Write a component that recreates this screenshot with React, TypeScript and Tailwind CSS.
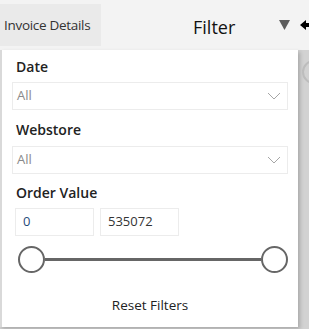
import React from "react";

function Chevron() {
  return (
    <svg width="14" height="8" viewBox="0 0 14 8" className="shrink-0">
      <path d="M1 1 L7 7 L13 1" fill="none" stroke="#a6a6a6" strokeWidth="1" />
    </svg>
  );
}

function SelectBox() {
  return (
    <div className="ml-[10px] mr-[10px] h-[28px] border border-[#ececec] flex items-center justify-between pl-[4px] pr-[6px]">
      <span className="text-[13px] text-[#8a8a8a]">All</span>
      <Chevron />
    </div>
  );
}

export default function App() {
  return (
    <div
      className="w-[309px] h-[329px] overflow-hidden bg-[#f3f3f3] flex flex-col"
      style={{ fontFamily: "'Open Sans', 'Noto Sans', sans-serif" }}
    >
      {/* top bar */}
      <div className="h-[50px] flex items-start shrink-0">
        <div className="mt-[4px] h-[42px] w-[101px] shrink-0 bg-[#eaeaea] flex items-center pl-[4px]">
          <span className="text-[13.5px] text-[#333] tracking-[-0.3px]">Invoice Details</span>
        </div>
        <div className="flex-1 flex items-center h-[50px] pt-[4px]">
          <span className="ml-[92px] text-[18px] text-[#111]">Filter</span>
          <svg width="11" height="10" viewBox="0 0 11 10" className="ml-[44px] shrink-0 -mt-[5px]">
            <path d="M0 0 H11 L5.5 10 Z" fill="#5c5c5c" />
          </svg>
          <svg width="12" height="12" viewBox="0 0 12 12" className="ml-[10px] shrink-0 -mt-[5px]">
            <path d="M0 6 L6 1 V4 H12 V8 H6 V11 Z" fill="#000" />
          </svg>
        </div>
      </div>

      {/* body */}
      <div className="flex flex-1 bg-[#d2d2d2]">
        <div className="w-[298px] h-[277px] shrink-0 bg-white border-l-2 border-[#d9d9d9] shadow-[2px_2px_4px_rgba(0,0,0,0.2)] flex flex-col">
          <div className="pl-[14px] pt-[6px] h-[32px] text-[14px] font-semibold text-[#222]">Date</div>
          <SelectBox />
          <div className="pl-[14px] pt-[9px] h-[36px] text-[14px] font-semibold text-[#222]">Webstore</div>
          <SelectBox />
          <div className="pl-[14px] pt-[8px] h-[34px] text-[14px] font-semibold text-[#222]">Order Value</div>
          <div className="flex gap-[6px] pl-[13px]">
            <div className="w-[79px] h-[28px] border border-[#ececec] flex items-center pl-[7px] text-[13px] text-[#1f4a7a]">0</div>
            <div className="w-[79px] h-[28px] border border-[#ececec] flex items-center pl-[7px] text-[13px] text-[#333]">535072</div>
          </div>
          <div className="mt-[9px] ml-[16px] mr-[10px] h-[28px] flex items-center">
            <div className="w-[27px] h-[27px] rounded-full border-2 border-[#666] bg-white shrink-0" />
            <div className="flex-1 h-[3px] bg-[#666]" />
            <div className="w-[27px] h-[27px] rounded-full border-2 border-[#666] bg-white shrink-0" />
          </div>
          <div className="mt-auto mb-[12px] text-center text-[13.5px] text-[#222]">Reset Filters</div>
        </div>
        <div className="flex-1 pt-[10px]">
          <div className="w-[24px] h-[24px] rounded-full border-2 border-[#bdbdbd] ml-[4px]" />
        </div>
      </div>
    </div>
  );
}
